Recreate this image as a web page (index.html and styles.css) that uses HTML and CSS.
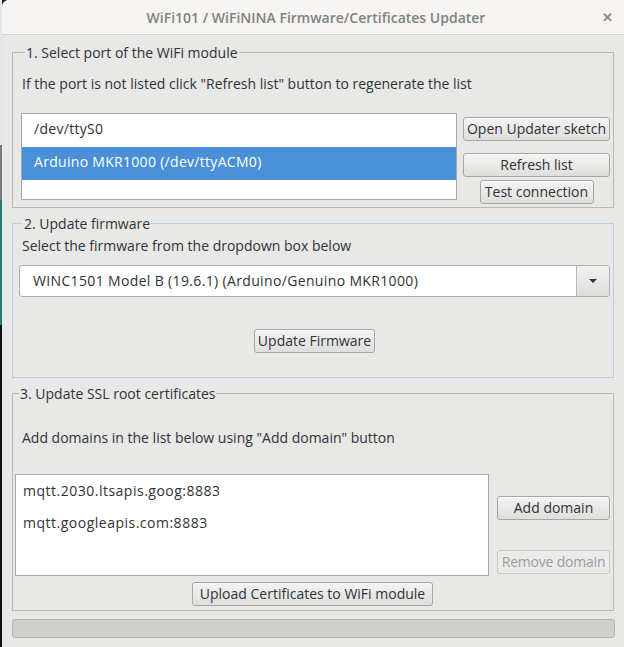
FILE: index.html
```html
<!DOCTYPE html>
<html>
<head>
<meta charset="utf-8">
<link rel="stylesheet" href="styles.css">
</head>
<body>
<div class="desk"></div>
<div class="window">
  <div class="titlebar">
    <span class="title">WiFi101 / WiFiNINA Firmware/Certificates Updater</span>
    <span class="close">&#x2715;</span>
  </div>
  <div class="content">
    <fieldset class="group g1">
      <legend>1. Select port of the WiFi module</legend>
      <div class="hint h1">If the port is not listed click "Refresh list" button to regenerate the list</div>
      <div class="row1">
        <div class="list ports">
          <div class="item">/dev/ttyS0</div>
          <div class="item selected">Arduino MKR1000 (/dev/ttyACM0)</div>
        </div>
        <div class="btncol1">
          <button class="btn wide b-open">Open Updater sketch</button>
          <button class="btn wide b-refresh">Refresh list</button>
          <button class="btn b-test">Test connection</button>
        </div>
      </div>
    </fieldset>

    <fieldset class="group g2">
      <legend>2. Update firmware</legend>
      <div class="hint h2">Select the firmware from the dropdown box below</div>
      <div class="combo">
        <div class="combo-text">WINC1501 Model B (19.6.1) (Arduino/Genuino MKR1000)</div>
        <div class="combo-btn"><span class="arrow"></span></div>
      </div>
      <div class="center c-fw"><button class="btn b-fw">Update Firmware</button></div>
    </fieldset>

    <fieldset class="group g3">
      <legend>3. Update SSL root certificates</legend>
      <div class="hint h3">Add domains in the list below using "Add domain" button</div>
      <div class="row3">
        <div class="list domains">
          <div class="ditem">mqtt.2030.ltsapis.goog:8883</div>
          <div class="ditem">mqtt.googleapis.com:8883</div>
        </div>
        <div class="btncol3">
          <button class="btn wide b-add">Add domain</button>
          <button class="btn wide disabled b-remove">Remove domain</button>
        </div>
      </div>
      <div class="center c-up"><button class="btn b-up">Upload Certificates to WiFi module</button></div>
    </fieldset>

    <div class="progress"></div>
  </div>
</div>
</body>
</html>
```

FILE: styles.css
```css
* { box-sizing: border-box; }
html, body { margin: 0; padding: 0; }
body {
  width: 624px;
  height: 647px;
  overflow: hidden;
  display: flex;
  background: #1b1b1b;
  font-family: "Open Sans", "Noto Sans", sans-serif;
  font-size: 14px;
  color: #2e3436;
}
.desk {
  width: 2px;
  flex: none;
  background: linear-gradient(to bottom, #e6e6e6 0, #e6e6e6 145px, #7a7a7a 145px, #7a7a7a 200px, #1f7a78 200px, #1f7a78 325px, #111 325px);
}
.window {
  flex: 1;
  background: #e8e8e7;
  border-top-left-radius: 7px;
  overflow: hidden;
  display: flex;
  flex-direction: column;
}
.titlebar {
  height: 35px;
  flex: none;
  background: #f6f5f4;
  border-bottom: 1px solid #d2d0cd;
  display: flex;
  align-items: center;
  justify-content: center;
  position: relative;
}
.title {
  font-weight: 600;
  color: #808280;
  font-size: 14px;
  margin-left: 6px;
}
.close {
  position: absolute;
  right: 11px;
  top: 8px;
  font-size: 13px;
  font-weight: 700;
  color: #8a8c8a;
}
.content {
  padding: 0 10px 0 10px;
  display: flex;
  flex-direction: column;
}
.group {
  margin: 0;
  padding: 0;
  border: 1px solid #b8b8b5;
  min-width: 0;
}
.group legend {
  padding: 0 1px;
  margin-left: 4px;
  line-height: 19px;
}
.g1 { margin-top: 8px; padding: 12px 3px 2px 8px; height: 165px; }
.g2 { margin-top: 6px; padding: 3px 3px 0 6px; height: 164px; border-color: #b9cfe6; }
.g3 { margin-top: 6px; padding: 25px 3px 0 2px; height: 227px; }
.hint { line-height: 19px; }
.h1 { margin-left: 1px; }
.h2 { margin-left: 3px; }
.h3 { margin-left: 7px; }

.row1 { display: flex; margin-top: 20px; align-items: flex-start; }
.list {
  background: #fff;
  border: 1px solid #a9a9a7;
}
.ports { width: 436px; height: 87px; }
.item { height: 33px; line-height: 29px; padding-left: 12px; letter-spacing: 0.3px; }
.item.selected { background: #4a90d9; color: #fff; }
.btncol1 {
  margin-left: 6px;
  width: 147px;
  display: flex;
  flex-direction: column;
  align-items: center;
  padding-top: 4px;
}
.btn {
  font-family: inherit;
  font-size: 14px;
  color: #2e3436;
  height: 24px;
  padding: 0 2px;
  line-height: 20px;
  border: 1px solid #a6a6a4;
  border-radius: 3px;
  background: linear-gradient(to bottom, #f4f4f3, #dededc);
  box-shadow: inset 0 1px 0 rgba(255,255,255,0.6);
  white-space: nowrap;
}
.btn.wide { width: 100%; }
.b-refresh { margin-top: 12px; }
.b-test { margin-top: 3px; width: 114px; }
.btn.disabled {
  color: #9a9c9a;
  background: #ebebea;
  border-color: #c9c9c7;
  box-shadow: none;
  letter-spacing: -0.2px;
}

.combo {
  margin-top: 10px;
  height: 32px;
  display: flex;
  border: 1px solid #b0b0ae;
  border-radius: 3px;
  background: #fff;
  overflow: hidden;
}
.combo-text { flex: 1; line-height: 29px; padding-left: 13px; letter-spacing: 0.35px; }
.combo-btn {
  width: 33px;
  border-left: 1px solid #b8b8b6;
  background: linear-gradient(to bottom, #f2f2f1, #dcdcdb);
  display: flex;
  align-items: center;
  justify-content: center;
}
.arrow {
  width: 0; height: 0;
  border-left: 4px solid transparent;
  border-right: 4px solid transparent;
  border-top: 4px solid #2e3436;
}
.center { display: flex; justify-content: center; }
.c-fw { margin-top: 32px; }
.b-fw { width: 121px; }

.row3 { display: flex; margin-top: 27px; align-items: flex-start; }
.domains { width: 474px; height: 102px; padding-top: 1px; }
.ditem { height: 32px; line-height: 30px; padding-left: 7px; letter-spacing: 0.5px; }
.btncol3 {
  margin-left: 8px;
  width: 113px;
  display: flex;
  flex-direction: column;
  padding-top: 22px;
}
.b-remove { margin-top: 30px; }
.c-up { margin-top: 6px; }
.b-up { width: 241px; }

.progress {
  margin-top: 8px;
  height: 19px;
  margin-right: -1px;
  background: #cfcfce;
  border: 1px solid #b3b3b1;
  border-radius: 3px;
}
```
